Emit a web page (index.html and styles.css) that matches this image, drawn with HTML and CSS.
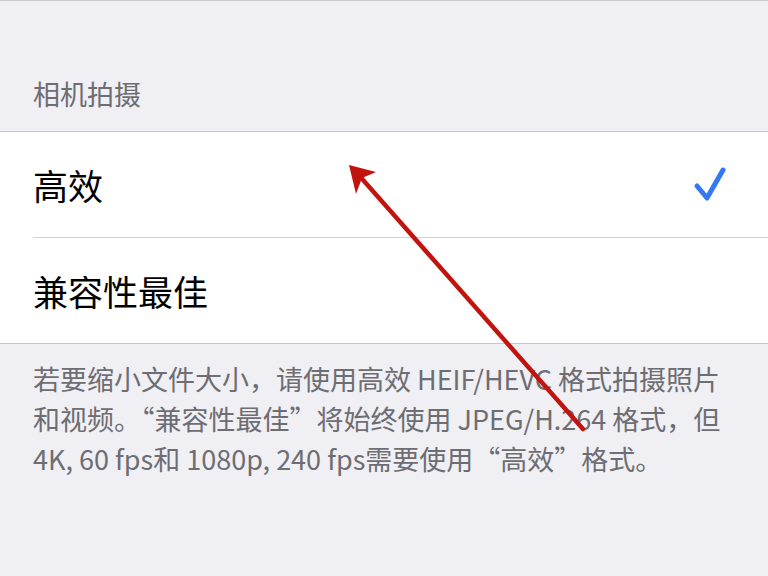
FILE: index.html
```html
<!DOCTYPE html>
<html lang="zh-CN">
<head>
    <meta charset="UTF-8">
    <meta name="viewport" content="width=device-width, initial-scale=1.0">
    <title>相机拍摄</title>
    <link rel="stylesheet" href="styles.css">
</head>
<body>
    <div class="screen">
        <div class="section-header">相机拍摄</div>

        <div class="group">
            <div class="row">
                <span class="row-label">高效</span>
                <svg class="check" width="34" height="40" viewBox="0 0 34 40">
                    <polyline points="4,22 14,34 30,6" fill="none" stroke="#3478f6" stroke-width="5" stroke-linecap="round" stroke-linejoin="round"/>
                </svg>
            </div>
            <div class="row">
                <span class="row-label">兼容性最佳</span>
            </div>
        </div>

        <p class="section-footer">若要缩小文件大小，请使用高效 HEIF/HEVC 格式拍摄照片和视频。“兼容性最佳”将始终使用 JPEG/H.264 格式，但 4K, 60 fps和 1080p, 240 fps需要使用“高效”格式。</p>

        <!-- annotation arrow drawn over the screenshot -->
        <svg class="annotation" width="768" height="576" viewBox="0 0 768 576">
            <line x1="583" y1="429" x2="356" y2="172" stroke="#c2140f" stroke-width="4.5" stroke-linecap="round"/>
            <polygon points="349,165 376,172 362,178 356,194" fill="#c2140f"/>
        </svg>
    </div>
</body>
</html>
```

FILE: styles.css
```css
body {
    margin: 0;
    background: #efeff4;
    font-family: "Noto Sans CJK SC", "Liberation Sans", sans-serif;
}
.screen {
    position: relative;
    width: 768px;
    height: 576px;
    overflow: hidden;
    border-top: 1px solid #c8c7cc;
    box-sizing: border-box;
}
.section-header {
    padding: 78px 33px 22px;
    font-size: 27px;
    line-height: 30px;
    color: #6d6d72;
}
.group {
    background: #fff;
    border-top: 1px solid #c8c7cc;
    border-bottom: 1px solid #c8c7cc;
    padding-left: 33px;
}
.row {
    display: flex;
    align-items: center;
    justify-content: space-between;
    height: 105px;
    padding-right: 41px;
}
.row + .row {
    border-top: 1px solid #d0d0d4;
}
.row-label {
    font-size: 35px;
    color: #000;
}
.check {
    display: block;
    margin-top: -2px;
}
.section-footer {
    margin: 0;
    padding: 15px 33px 0;
    font-size: 27px;
    line-height: 40px;
    color: #6d6d72;
}
.annotation {
    position: absolute;
    left: 0;
    top: -1px;
    pointer-events: none;
}
```
